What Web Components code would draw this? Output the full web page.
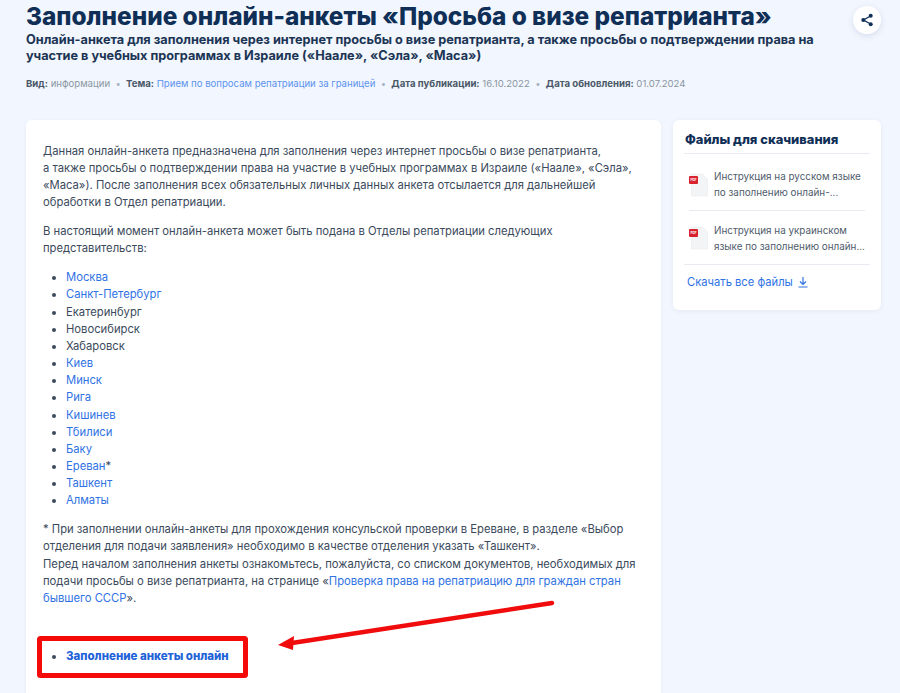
<!DOCTYPE html>
<html lang="ru"><head><meta charset="utf-8"><title>Анкета</title>
<style>
html,body{margin:0;height:693px;overflow:hidden;background:#f2f6fe;font-family:Inter,"Noto Sans",sans-serif}
</style></head><body>
<page-shell>
  <page-header slot="head"></page-header>
  <main-card slot="main"></main-card>
  <files-card slot="side"></files-card>
  <red-mark></red-mark>
</page-shell>
<script>
const NAVY='#0f2f57',TXT='#3b4a5c',LINK='#2f72e4';
class Shell extends HTMLElement{constructor(){super();this.attachShadow({mode:'open'}).innerHTML=`<style>
:host{display:block;position:relative;height:693px;overflow:hidden;padding:0 19px 0 26px;box-sizing:border-box}
.cols{display:grid;grid-template-columns:635px 208px;gap:12px;align-items:start}
</style><slot name="head"></slot><div class="cols"><slot name="main"></slot><slot name="side"></slot></div><slot></slot>`}}
class Header extends HTMLElement{constructor(){super();this.attachShadow({mode:'open'}).innerHTML=`<style>
:host{display:block;position:relative;height:120px;padding-top:1px;box-sizing:border-box}
h1{margin:0;font:800 24.37px/31px Inter,sans-serif;color:${NAVY};white-space:nowrap}
h2{margin:0;font:700 12.71px/16px Inter,sans-serif;color:#1c3555;width:800px}
.meta{margin-top:13px;font:400 9.6px/14px Inter,sans-serif;color:#8b96a3;display:flex;white-space:nowrap}
.meta b{color:#4a5868;font-weight:700}.meta a{color:#5c93ee}
.meta i{font-style:normal;color:#aab4c0;margin:0 5.3px}
.share{position:absolute;right:0;top:6px;width:28px;height:28px;border-radius:50%;background:#fff;box-shadow:0 2px 6px rgba(60,90,140,.15);display:flex;align-items:center;justify-content:center}
</style><h1>Заполнение онлайн-анкеты «Просьба о визе репатрианта»</h1>
<h2>Онлайн-анкета для заполнения через интернет просьбы о визе репатрианта, а также просьбы о подтверждении права на участие в учебных программах в Израиле («Наале», «Сэла», «Маса»)</h2>
<div class="meta"><span><b>Вид:</b> информации</span><i>•</i><span><b>Тема:</b> <a>Прием по вопросам репатриации за границей</a></span><i>•</i><span><b>Дата публикации:</b> 16.10.2022</span><i>•</i><span><b>Дата обновления:</b> 01.07.2024</span></div>
<div class="share"><svg width="14" height="14" viewBox="0 0 14 14"><path d="M10.5 3 3.5 7l7 4" fill="none" stroke="${NAVY}" stroke-width="1.4"/><circle cx="10.7" cy="2.8" r="2" fill="${NAVY}"/><circle cx="3.3" cy="7" r="2" fill="${NAVY}"/><circle cx="10.7" cy="11.2" r="2" fill="${NAVY}"/></svg></div>`}}
class Main extends HTMLElement{constructor(){super();
const cities=[['Москва',1],['Санкт-Петербург',1],['Екатеринбург'],['Новосибирск'],['Хабаровск'],['Киев',1],['Минск',1],['Рига',1],['Кишинев',1],['Тбилиси',1],['Баку',1],['Ереван',1,'*'],['Ташкент',1],['Алматы',1]];
this.attachShadow({mode:'open'}).innerHTML=`<style>
:host{display:block;background:#fff;border-radius:6px;height:640px;padding:23px 17px 0;box-sizing:border-box;font:400 11.24px/17.15px Inter,sans-serif;color:${TXT};box-shadow:0 1px 4px rgba(60,90,140,.05)}
p{margin:0 0 11.7px}a{color:${LINK}}
ul{margin:0 0 11.7px;padding-left:23px}
.cta{margin-top:41px}.cta a{font-weight:800;color:#1f63d8;font-size:11.5px}
</style>
<p>Данная онлайн-анкета предназначена для заполнения через интернет просьбы о визе репатрианта,<br>а также просьбы о подтверждении права на участие в учебных программах в Израиле («Наале», «Сэла», «Маса»). После заполнения всех обязательных личных данных анкета отсылается для дальнейшей обработки в Отдел репатриации.</p>
<p>В настоящий момент онлайн-анкета может быть подана в Отделы репатриации следующих представительств:</p>
<ul>${cities.map(c=>`<li>${c[1]?`<a>${c[0]}</a>`:c[0]}${c[2]||''}</li>`).join('')}</ul>
<p>* При заполнении онлайн-анкеты для прохождения консульской проверки в Ереване, в разделе «Выбор отделения для подачи заявления» необходимо в качестве отделения указать «Ташкент».<br>Перед началом заполнения анкеты ознакомьтесь, пожалуйста, со списком документов, необходимых для подачи просьбы о визе репатрианта, на странице «<a>Проверка права на репатриацию для граждан стран бывшего СССР</a>».</p>
<ul class="cta"><li><a>Заполнение анкеты онлайн</a></li></ul>`}}
class Files extends HTMLElement{constructor(){super();
const pdf=`<svg width="20" height="24" viewBox="0 0 20 24"><path d="M2.5 1h11l5 5v17h-16z" fill="#f3f4f6" stroke="#e9ebef" stroke-width=".6"/><rect x="0" y="3" width="9" height="8" rx="1" fill="#d8232f"/><text x="4.5" y="8.4" text-anchor="middle" font-family="Inter,sans-serif" font-size="3.2" font-weight="700" fill="#fff">PDF</text></svg>`;
this.attachShadow({mode:'open'}).innerHTML=`<style>
:host{display:block;background:#fff;border-radius:6px;height:190px;padding:12px 11px 0;box-sizing:border-box;box-shadow:0 1px 5px rgba(60,90,140,.08)}
h3{margin:0;font:800 12.9px/16px Inter,sans-serif;color:${NAVY};padding:0 0 5px 1px;border-bottom:1px solid #e8ecf2}
.f{display:flex;gap:5px;margin:0 5px;height:57px;box-sizing:border-box;padding:15px 0 0;font:400 9.87px/15.5px Inter,sans-serif;color:#4f5c6c;border-bottom:1px solid #e8ecf2}
.f.b{margin:0;height:54px;padding:12px 5px 0}
.f svg{flex:none;margin-top:4px}.f.b svg{margin-top:3px}.f span{white-space:nowrap}
.all{display:flex;align-items:center;gap:5px;margin:10px 3px;font:400 11.2px/14px Inter,sans-serif;color:${LINK}}
</style><h3>Файлы для скачивания</h3>
<div class="f">${pdf}<span>Инструкция на русском языке<br>по заполнению онлайн-...</span></div>
<div class="f b">${pdf}<span>Инструкция на украинском<br>языке по заполнению онлайн...</span></div>
<div class="all">Скачать все файлы <svg width="10" height="11" viewBox="0 0 10 11"><path d="M5 0v7M2 4.5 5 7.5 8 4.5M.5 10h9" fill="none" stroke="${LINK}" stroke-width="1.2"/></svg></div>`}}
class Mark extends HTMLElement{constructor(){super();this.attachShadow({mode:'open'}).innerHTML=`<style>
:host{display:block;position:absolute;left:0;top:0;width:900px;height:693px;pointer-events:none}
svg{display:block}
</style><svg width="900" height="693" viewBox="0 0 900 693"><rect x="39.5" y="638.5" width="206" height="37" rx="1" fill="none" stroke="#f50a0a" stroke-width="5"/><path d="M552 603 292 643" stroke="#f00c0c" stroke-width="4.4" stroke-linecap="round"/><path d="M278 645 294 636 293 650z" fill="#f00c0c"/></svg>`}}
customElements.define('page-shell',Shell);customElements.define('page-header',Header);customElements.define('main-card',Main);customElements.define('files-card',Files);customElements.define('red-mark',Mark);
</script></body></html>
